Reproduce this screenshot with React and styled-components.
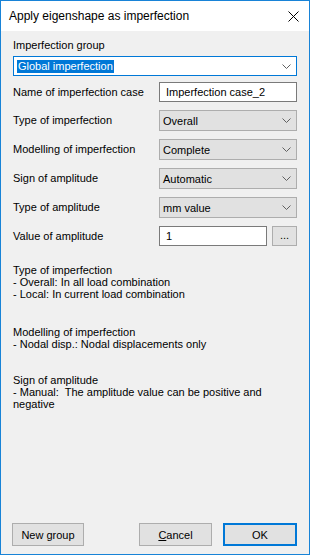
import React from "react";
import styled, { createGlobalStyle } from "styled-components";

const Global = createGlobalStyle`
  html, body { margin: 0; padding: 0; background: #f0f0f0; }
  * { box-sizing: border-box; }
`;

const Window = styled.div`
  width: 310px;
  height: 555px;
  border: 1px solid #1883d7;
  display: flex;
  flex-direction: column;
  font-family: "Liberation Sans", Arial, sans-serif;
  font-size: 11px;
  color: #000;
  background: #f0f0f0;
`;

const TitleBar = styled.div`
  height: 30px;
  background: #fff;
  display: flex;
  align-items: center;
  justify-content: space-between;
  padding: 0 10px 0 8px;
  flex-shrink: 0;
`;

const Title = styled.div`
  font-size: 12px;
  margin-top: -1px;
`;

const Body = styled.div`
  flex: 1;
  display: flex;
  flex-direction: column;
  padding: 8px 12px 8px 12px;
`;

const GroupLabel = styled.div`
  line-height: 13px;
  height: 13px;
  margin-bottom: 4px;
`;

const Combo = styled.div`
  height: ${(p) => (p.$h ? p.$h : 21)}px;
  display: flex;
  align-items: center;
  justify-content: space-between;
  border: 1px solid ${(p) => (p.$focused ? "#0078d7" : "#adadad")};
  background: ${(p) => (p.$focused ? "#fff" : "#e1e1e1")};
  padding: 0 5px 0 3px;
`;

const Selected = styled.span`
  background: #0078d7;
  color: #fff;
  line-height: 13px;
  padding: 0 1px;
`;

const Rows = styled.div`
  display: grid;
  grid-template-columns: 146px 138px;
  row-gap: 8px;
  margin-top: 6px;
  align-items: center;
`;

const Label = styled.div`
  line-height: 13px;
`;

const TextInput = styled.div`
  height: 20px;
  border: 1px solid #7a7a7a;
  background: #fff;
  display: flex;
  align-items: center;
  padding-left: 6px;
`;

const ValueRow = styled.div`
  display: flex;
  gap: 5px;
`;

const SmallButton = styled.div`
  width: 25px;
  height: 20px;
  border: 1px solid #adadad;
  background: #e1e1e1;
  display: flex;
  align-items: center;
  justify-content: center;
  padding-bottom: 3px;
`;

const Info = styled.div`
  margin-top: 18px;
  display: flex;
  flex-direction: column;
  gap: 24px;
  line-height: 12px;
`;

const Para = styled.div`
  margin-bottom: ${(p) => p.$mb || 0}px;
`;

const Footer = styled.div`
  margin-top: auto;
  display: flex;
  align-items: center;
  margin-left: -1px;
`;

const Button = styled.div`
  width: ${(p) => p.$w || 73}px;
  height: 23px;
  border: ${(p) => (p.$default ? "2px solid #0078d7" : "1px solid #adadad")};
  background: #e1e1e1;
  display: flex;
  align-items: center;
  justify-content: center;
  margin-left: ${(p) => p.$ml || 0}px;
`;

const Chevron = () => (
  <svg width="9" height="5" viewBox="0 0 9 5">
    <polyline points="0.5,0.5 4.5,4.5 8.5,0.5" fill="none" stroke="#606060" strokeWidth="1" />
  </svg>
);

const CloseIcon = () => (
  <svg width="11" height="11" viewBox="0 0 11 11">
    <line x1="0.5" y1="0.5" x2="10.5" y2="10.5" stroke="#000" strokeWidth="1" />
    <line x1="10.5" y1="0.5" x2="0.5" y2="10.5" stroke="#000" strokeWidth="1" />
  </svg>
);

const rows = [
  ["Type of imperfection", "Overall"],
  ["Modelling of imperfection", "Complete"],
  ["Sign of amplitude", "Automatic"],
  ["Type of amplitude", "mm value"],
];

export default function App() {
  return (
    <>
      <Global />
      <Window>
        <TitleBar>
          <Title>Apply eigenshape as imperfection</Title>
          <CloseIcon />
        </TitleBar>
        <Body>
          <GroupLabel>Imperfection group</GroupLabel>
          <Combo $focused $h={20}>
            <Selected>Global imperfection</Selected>
            <Chevron />
          </Combo>
          <Rows>
            <Label>Name of imperfection case</Label>
            <TextInput>Imperfection case_2</TextInput>
            {rows.map(([l, v]) => (
              <React.Fragment key={l}>
                <Label>{l}</Label>
                <Combo>
                  <span>{v}</span>
                  <Chevron />
                </Combo>
              </React.Fragment>
            ))}
            <Label>Value of amplitude</Label>
            <ValueRow>
              <TextInput style={{ flex: 1 }}>1</TextInput>
              <SmallButton>...</SmallButton>
            </ValueRow>
          </Rows>
          <Info>
            <Para $mb={2}>
              Type of imperfection
              <br />- Overall: In all load combination
              <br />- Local: In current load combination
            </Para>
            <Para>
              Modelling of imperfection
              <br />- Nodal disp.: Nodal displacements only
            </Para>
            <Para>
              Sign of amplitude
              <br />- Manual:&nbsp; The amplitude value can be positive and
              <br />negative
            </Para>
          </Info>
          <Footer>
            <Button $w={72}>New group</Button>
            <Button $ml={55}>
              <span>
                <u>C</u>ancel
              </span>
            </Button>
            <Button $default $w={74} $ml={11}>OK</Button>
          </Footer>
        </Body>
      </Window>
    </>
  );
}
